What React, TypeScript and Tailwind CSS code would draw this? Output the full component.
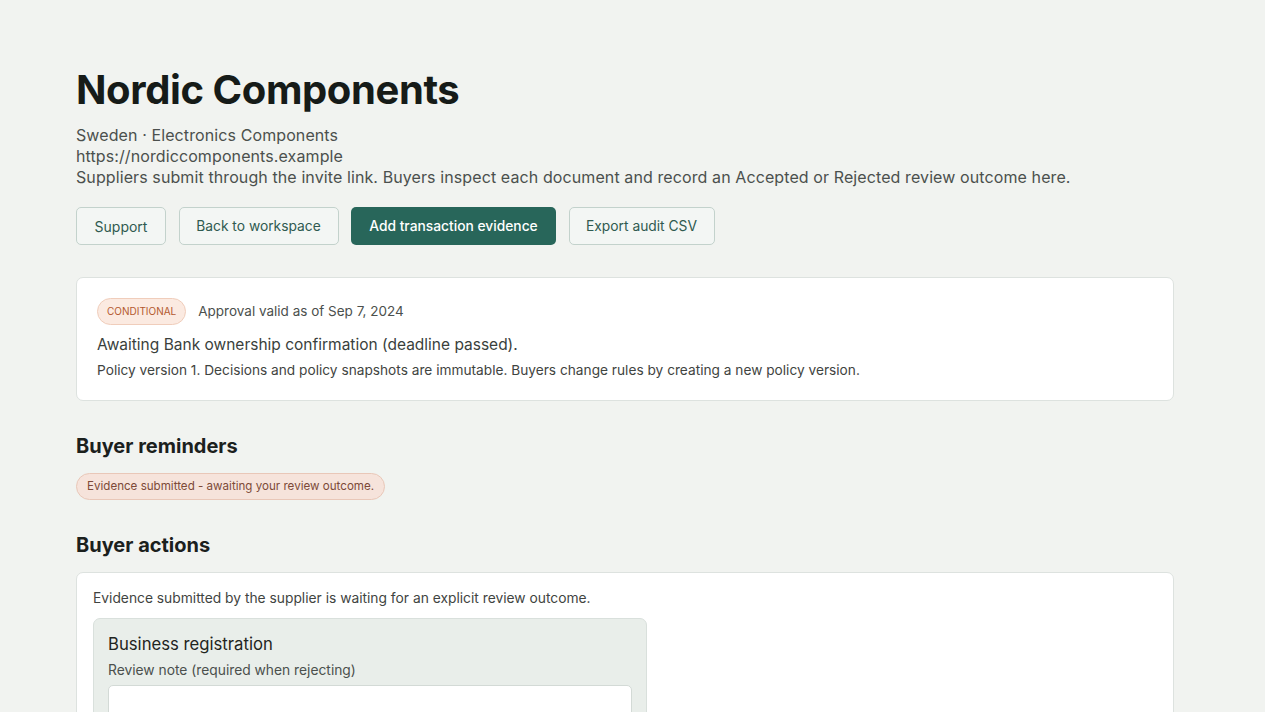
import React from 'react';

const reminders = ['Evidence submitted - awaiting your review outcome.'];

export default function App() {
  return (
    <div className="min-h-[1100px] bg-[#f1f3f0] pr-[15px] text-[#1b201d] font-['Inter','Liberation_Sans',sans-serif]">
      <div className="mx-auto max-w-[1098px] pt-[63px] pb-16">
        <h1 className="text-[40px] leading-[54px] font-bold tracking-[-0.01em] text-[#161b18]">Nordic Components</h1>
        <div className="mt-[8px] text-[16px] leading-[21px] tracking-[0.1px] text-[#4b504d]">
          <p>Sweden · Electronics Components</p>
          <p>https://nordiccomponents.example</p>
          <p>Suppliers submit through the invite link. Buyers inspect each document and record an Accepted or Rejected review outcome here.</p>
        </div>

        <div className="mt-[19px] flex gap-[12.5px]">
          <button className="h-[38px] w-[90px] rounded-[5px] border border-[#c3d2cc] bg-[#f3f6f4] text-[14px] text-[#2f5a50]">Support</button>
          <button className="h-[38px] w-[160px] rounded-[5px] border border-[#c3d2cc] bg-[#f3f6f4] text-[13.8px] text-[#2f5a50]">Back to workspace</button>
          <button className="h-[38px] w-[205px] rounded-[5px] bg-[#28665a] text-[13.8px] font-medium text-white">Add transaction evidence</button>
          <button className="h-[38px] w-[146px] rounded-[5px] border border-[#c3d2cc] bg-[#f3f6f4] text-[13.8px] text-[#2f5a50]">Export audit CSV</button>
        </div>

        <div className="mt-[32px] rounded-[7px] border border-[#dde2df] bg-white px-5 pt-5 pb-[20px]">
          <div className="flex items-center gap-3">
            <span className="h-[27px] px-[9px] flex items-center rounded-full border border-[#f0cdbb] bg-[#fbeae1] text-[10px] uppercase text-[#b3592f]">Conditional</span>
            <span className="text-[13.5px] text-[#4b504d]">Approval valid as of Sep 7, 2024</span>
          </div>
          <p className="mt-[9px] text-[15.5px] leading-[22px] text-[#3a3f3c]">Awaiting Bank ownership confirmation (deadline passed).</p>
          <p className="mt-[4px] text-[13.7px] leading-[20px] text-[#3f4441]">Policy version 1. Decisions and policy snapshots are immutable. Buyers change rules by creating a new policy version.</p>
        </div>

        <h2 className="mt-[31px] text-[20px] leading-[28px] font-bold text-[#1b201d]">Buyer reminders</h2>
        <div className="mt-[13px] flex flex-wrap gap-2">
          {reminders.map((r) => (
            <span key={r} className="h-[27px] px-[10px] flex items-center rounded-full border border-[#e9c7b8] bg-[#f6e3db] text-[11.6px] text-[#7d4a38]">{r}</span>
          ))}
        </div>

        <h2 className="mt-[31px] text-[20px] leading-[28px] font-bold text-[#1b201d]">Buyer actions</h2>
        <div className="mt-[13px] rounded-[7px] border border-[#dde2df] bg-white px-4 pt-[15px] pb-4">
          <p className="text-[13.8px] leading-[20px] text-[#3f4441]">Evidence submitted by the supplier is waiting for an explicit review outcome.</p>
          <div className="mt-[10px] w-[554px] rounded-[7px] border border-[#d9e0dc] bg-[#e9eeea] px-[14px] pt-[13px] pb-4">
            <h3 className="text-[16.7px] leading-[24px] text-[#1f2421]">Business registration</h3>
            <label className="mt-[4px] block text-[13.8px] leading-[20px] text-[#4b504d]">Review note (required when rejecting)</label>
            <textarea className="mt-[5px] block w-full h-[80px] rounded-[5px] border border-[#d3dad6] bg-white" />
            <div className="mt-3 flex gap-3">
              <button className="h-[38px] px-[17px] rounded-[5px] bg-[#28665a] text-[14px] text-white">Accept</button>
              <button className="h-[38px] px-[17px] rounded-[5px] border border-[#c3d2cc] bg-[#f3f6f4] text-[14px] text-[#2f5a50]">Reject</button>
            </div>
          </div>
        </div>
      </div>
    </div>
  );
}
